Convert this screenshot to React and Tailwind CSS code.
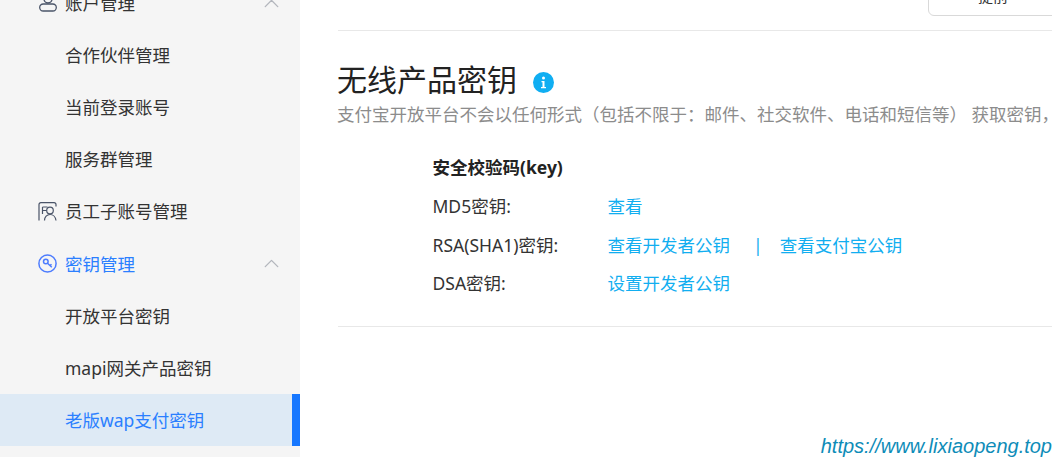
import { ChevronUp } from "lucide-react";

const font = "font-['Noto_Sans','Noto_Sans_CJK_SC',sans-serif]";

function UserIcon() {
  return (
    <svg width="18" height="18" viewBox="0 0 18 18" fill="none" stroke="#4a5468" strokeWidth="1.3">
      <circle cx="9" cy="5" r="4" />
      <rect x="0.700" y="10" width="16.600" height="7" rx="3.500" />
    </svg>
  );
}

function StaffIcon() {
  return (
    <svg width="19" height="19" viewBox="0 0 19 19" fill="none" stroke="#4a5468" strokeWidth="1.2">
      <path d="M1 18.500V2.500A1.800 1.800 0 0 1 2.800 .700h13.400a1.800 1.800 0 0 1 1.800 1.800v2" />
      <path d="M4.500 5h5M4.500 5v7M4.500 8.500h4" />
      <circle cx="12" cy="8.500" r="3.300" />
      <path d="M6.500 18.500c0-3.500 2.500-6 5.500-6s5.500 2.500 6 6" />
    </svg>
  );
}

function KeyIcon() {
  return (
    <svg width="19" height="19" viewBox="0 0 19 19" fill="none" stroke="#4d7cfe" strokeWidth="1.5">
      <circle cx="9.500" cy="9.500" r="8.600" />
      <circle cx="7.800" cy="7.500" r="2.300" />
      <path d="M9.500 9.200l4.300 4M12 11.600l1.500-1.400" />
    </svg>
  );
}

function MenuItem({ icon, label, open, active, selected }) {
  return (
    <div className={`relative flex h-[52.125px] items-center text-[17.5px] ${selected ? "bg-[#deeaf5] text-[#2b7fff]" : active ? "text-[#2b7fff]" : "text-[#333333]"}`}>
      <div className="flex w-[65px] shrink-0 justify-end pr-[8px]">{icon}</div>
      <span>{label}</span>
      {open && <ChevronUp size={25} strokeWidth={1.3} className="absolute right-[16.500px] text-[#b3b6bd]" />}
      {selected && <div className="absolute right-0 top-0 h-full w-2 bg-[#1677ff]" />}
    </div>
  );
}

function KeyRow({ label, children }) {
  return (
    <div className="flex h-[38.500px] items-center text-[17.5px]">
      <div className="w-[175px] shrink-0 text-[#333333]">{label}</div>
      <div className="flex items-center text-[#12aef0]">{children}</div>
    </div>
  );
}

export default function App() {
  return (
    <div className={`relative flex h-[457px] w-[1052px] overflow-hidden bg-white ${font}`}>
      <aside className="h-full w-[300px] shrink-0 overflow-hidden bg-[#f5f5f5]">
        <div className="-mt-[23px]">
          <MenuItem icon={<UserIcon />} label="账户管理" open />
          <MenuItem label="合作伙伴管理" />
          <MenuItem label="当前登录账号" />
          <MenuItem label="服务群管理" />
          <MenuItem icon={<StaffIcon />} label="员工子账号管理" />
          <MenuItem icon={<KeyIcon />} label="密钥管理" open active />
          <MenuItem label="开放平台密钥" />
          <MenuItem label="mapi网关产品密钥" />
          <MenuItem label="老版wap支付密钥" selected />
        </div>
      </aside>

      <main className="min-w-0 flex-1 pl-[38px]">
        <div className="flex h-[31px] justify-end border-b border-[#e8e8e8]">
          <button className="-mr-[6px] -mt-[24px] h-[40px] w-[130px] shrink-0 rounded-md border border-[#d9d9d9] bg-white text-[15px] text-[#333333]">
            提前
          </button>
        </div>

        <div className="mt-[30px] flex h-[38px] items-center">
          <h1 className="-ml-px text-[30px] leading-[38px] font-normal text-[#222222]">无线产品密钥</h1>
          <svg className="ml-[16px] mt-[4px]" width="21" height="21" viewBox="0 0 21 21">
            <circle cx="10.500" cy="10.500" r="10.500" fill="#10aef2" />
            <circle cx="10.500" cy="6" r="1.500" fill="#ffffff" />
            <path d="M8.500 9h3v6h1.500v1.300H8v-1.300h1.500V10.300h-1z" fill="#ffffff" />
          </svg>
        </div>

        <p className="-ml-px mt-[3px] text-[17.5px] leading-[24px] whitespace-nowrap text-[#8c8c8c]">
          支付宝开放平台不会以任何形式（包括不限于：邮件、社交软件、电话和短信等） 获取密钥，
        </p>

        <div className="mt-[22px] border-b border-[#e8e8e8] pb-[23.500px] pl-[94.500px]">
          <div className="flex h-[39px] items-center text-[17.5px] font-bold text-[#222222]">安全校验码(key)</div>
          <KeyRow label="MD5密钥:">查看</KeyRow>
          <KeyRow label="RSA(SHA1)密钥:">
            <span>查看开发者公钥</span>
            <span className="ml-[23px] mr-[17px]">|</span>
            <span>查看支付宝公钥</span>
          </KeyRow>
          <KeyRow label="DSA密钥:">设置开发者公钥</KeyRow>
        </div>
      </main>

      <div className="absolute bottom-[1px] right-0 font-['Liberation_Sans',sans-serif] text-[20px] leading-none italic text-[#0e8cb8]">
        https://www.lixiaopeng.top
      </div>
    </div>
  );
}
